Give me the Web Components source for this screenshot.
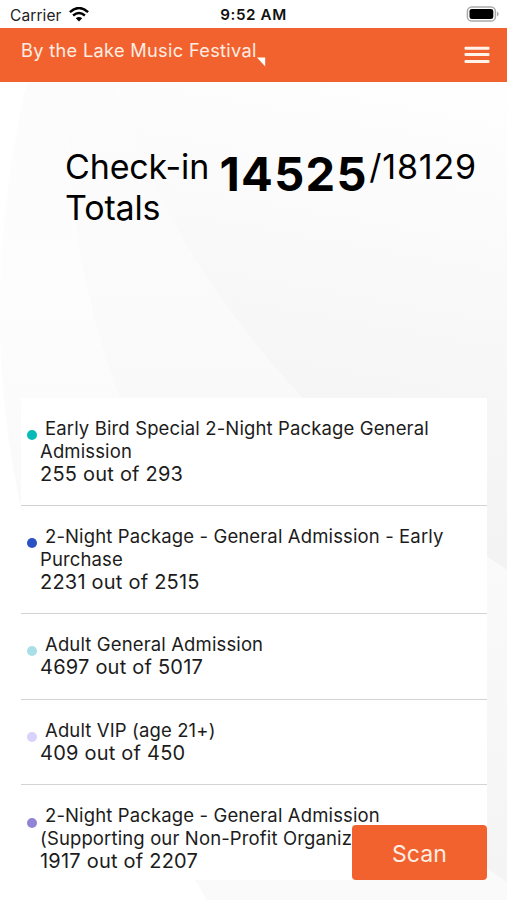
<!DOCTYPE html>
<html lang="en">
<head>
<meta charset="utf-8">
<title>Check-in Totals</title>
<style>
html,body{margin:0;height:100%;overflow:hidden}
body{font-family:Inter,"Liberation Sans",sans-serif;color:#000;background:#fff}
</style>
</head>
<body>
<checkin-app></checkin-app>
<script>
class StatusBar extends HTMLElement{
  constructor(){super();this.attachShadow({mode:'open'}).innerHTML=`
<style>
:host{display:grid;grid-template-columns:1fr auto 1fr;align-items:center;height:28px;padding:2px 8px 0 10px;box-sizing:border-box;background:#fff;flex:none}
.l{display:flex;align-items:center;gap:7px;font-size:15.5px;letter-spacing:.1px;color:#222}
.t{font-size:15.2px;font-weight:600;letter-spacing:.6px;color:#111;margin:-1px 2px 0 0}
.r{display:flex;justify-content:flex-end;margin-top:-2px}
.l svg{margin-top:-2px}
svg{display:block}
</style>
<div class="l"><span>Carrier</span><svg width="20" height="15" viewBox="0 0 20 15"><g fill="none" stroke="#000" stroke-width="2.5"><path d="M.9 5.1Q10-3 19.1 5.1"/><path d="M4.1 8.5Q10 3.5 15.9 8.5"/></g><path d="M6.8 11.2Q10 8.8 13.2 11.2L10 14.6Z"/></svg></div>
<span class="t">9:52 AM</span>
<div class="r"><svg width="33" height="16" viewBox="0 0 33 16"><rect x="1.4" y=".9" width="28" height="14.2" rx="4.4" fill="#fff" stroke="#aaa" stroke-width="1.5"/><rect x="3.5" y="2.9" width="23.8" height="10.2" rx="2.4"/><path d="M31 5.5q1.7.8 1.7 2.5T31 10.5z" fill="#aaa"/></svg></div>`}
}
class AppHeader extends HTMLElement{
  constructor(){super();this.attachShadow({mode:'open'}).innerHTML=`
<style>
:host{display:flex;justify-content:space-between;align-items:flex-start;height:54px;padding:0 17px 0 21px;box-sizing:border-box;background:#f2622f;color:#ffede2;flex:none}
.name{display:flex;align-items:flex-start;padding-top:11px;font-size:18.2px;line-height:22px;letter-spacing:.32px}
.name svg{margin-top:18px}
.menu{margin-top:18px}
svg{display:block}
</style>
<div class="name"><slot></slot><svg width="9" height="10" viewBox="0 0 9 10"><path d="M0 .6h8.2v8.8z" fill="#fff"/></svg></div>
<svg class="menu" width="26" height="18" viewBox="0 0 26 18"><g fill="#fff3ea"><rect x=".5" y=".7" width="25" height="3" rx="1"/><rect x=".5" y="7.1" width="25" height="3" rx="1"/><rect x=".5" y="14" width="25" height="3" rx="1"/></g></svg>`}
}
class PageBackdrop extends HTMLElement{
  constructor(){super();this.attachShadow({mode:'open'}).innerHTML=`
<style>:host{display:block;position:absolute;inset:0;z-index:-1}svg{display:block}</style>
<svg width="507" height="818" viewBox="0 82 507 818">
<defs>
<linearGradient id="a" gradientUnits="userSpaceOnUse" x1="400" y1="82" x2="320" y2="520"><stop offset="0" stop-color="#fefefe"/><stop offset=".25" stop-color="#fbfbfb"/><stop offset=".7" stop-color="#f6f6f6"/><stop offset="1" stop-color="#f3f3f3"/></linearGradient>
<linearGradient id="b" x1="0" y1="0" x2="0" y2="1"><stop offset="0" stop-color="#fcfcfc"/><stop offset="1" stop-color="#f8f8f8"/></linearGradient>
<linearGradient id="c" x1="0" y1="0" x2="0" y2="1"><stop offset="0" stop-color="#fcfcfc"/><stop offset=".5" stop-color="#fdfdfd"/><stop offset="1" stop-color="#f9f9f9"/></linearGradient>
<linearGradient id="d" x1="0" y1="0" x2="0" y2="1"><stop offset="0" stop-color="#fafafa"/><stop offset="1" stop-color="#f4f4f4"/></linearGradient>
</defs>
<path d="M0 82H507V900H0Z" fill="#fff"/>
<path d="M27 82C-12 250-5 400 24 520L150 520 69 82Z" fill="url(#c)"/>
<path d="M69 82C66 220 90 320 121 400L200 560H450L303 398C220 300 150 200 113 82Z" fill="url(#b)"/>
<path d="M113 82C150 200 220 310 303 398Q380 490 507 570V82Z" fill="url(#a)"/>
<path d="M487 558L507 570V884L487 872Z" fill="url(#d)"/>
<path d="M195 880L487 868 507 882V900H207Z" fill="#fafafa"/>
</svg>`}
}
class CheckinTotals extends HTMLElement{
  constructor(){super();this.attachShadow({mode:'open'}).innerHTML=`
<style>
:host{display:flex;align-items:flex-start;height:316px;padding:65px 0 0 65px;box-sizing:border-box;flex:none;font-size:34px;line-height:40.5px;letter-spacing:-.15px}
.label{width:154.5px}
b{font-size:47px;line-height:54px;font-weight:700;letter-spacing:1.3px}
.total{letter-spacing:.8px;margin-left:1.5px}
</style>
<span class="label"><slot></slot></span><b>${this.getAttribute('count')}</b><span class="total">/${this.getAttribute('total')}</span>`}
}
class TicketRow extends HTMLElement{
  constructor(){super();this.attachShadow({mode:'open'}).innerHTML=`
<style>
:host{display:grid;grid-template-columns:10px 1fr;column-gap:3px;box-sizing:border-box;min-height:85.6px;padding:19px 20px 19px 6px;border-bottom:1px solid #d3d3d3;font-size:18.5px;line-height:23px;letter-spacing:.13px;color:#1c1c1c}
i{width:10px;height:10px;border-radius:50%;margin-top:13.4px;background:var(--dot)}
.name{text-indent:5px}
.count{font-size:20px;letter-spacing:.22px}
</style>
<i></i><div><div class="name"><slot></slot></div><div class="count">${this.getAttribute('count')}</div></div>`}
}
class TicketList extends HTMLElement{
  constructor(){super();this.attachShadow({mode:'open'}).innerHTML=`
<style>:host{display:block;margin:0 20px 0 21px;height:482px;overflow:hidden;background:#fff;flex:none}</style><slot></slot>`}
}
class ScanButton extends HTMLElement{
  constructor(){super();this.attachShadow({mode:'open'}).innerHTML=`
<style>:host{display:block;position:absolute;right:20px;bottom:20px;width:135px;height:55px}
button{all:unset;box-sizing:border-box;width:100%;height:100%;padding-top:2px;display:flex;align-items:center;justify-content:center;background:#f2622f;border-radius:4px;color:#ffede2;font-size:23px;letter-spacing:.1px}</style><button><slot></slot></button>`}
}
class CheckinApp extends HTMLElement{
  constructor(){super();this.attachShadow({mode:'open'}).innerHTML=`
<style>
:host{display:flex;flex-direction:column;position:relative;width:507px;height:900px;overflow:hidden}
main{position:relative;z-index:0;height:818px;flex:none;display:flex;flex-direction:column}
</style>
<status-bar></status-bar>
<app-header>By the Lake Music Festival</app-header>
<main><page-backdrop></page-backdrop>
<checkin-totals count="14525" total="18129">Check-in Totals</checkin-totals>
<ticket-list>
<ticket-row style="--dot:#06bab5" count="255 out of 293">Early Bird Special 2-Night Package General Admission</ticket-row>
<ticket-row style="--dot:#2a52c4" count="2231 out of 2515">2-Night Package - General Admission - Early Purchase</ticket-row>
<ticket-row style="--dot:#a9e0e8" count="4697 out of 5017">Adult General Admission</ticket-row>
<ticket-row style="--dot:#d9d2fc" count="409 out of 450">Adult VIP (age 21+)</ticket-row>
<ticket-row style="--dot:#9184d6" count="1917 out of 2207">2-Night Package - General Admission<br>(Supporting our Non-Profit Organiz</ticket-row>
</ticket-list>
<scan-button>Scan</scan-button></main>`}
}
customElements.define('status-bar',StatusBar);
customElements.define('app-header',AppHeader);
customElements.define('page-backdrop',PageBackdrop);
customElements.define('checkin-totals',CheckinTotals);
customElements.define('ticket-row',TicketRow);
customElements.define('ticket-list',TicketList);
customElements.define('scan-button',ScanButton);
customElements.define('checkin-app',CheckinApp);
</script>
</body>
</html>
